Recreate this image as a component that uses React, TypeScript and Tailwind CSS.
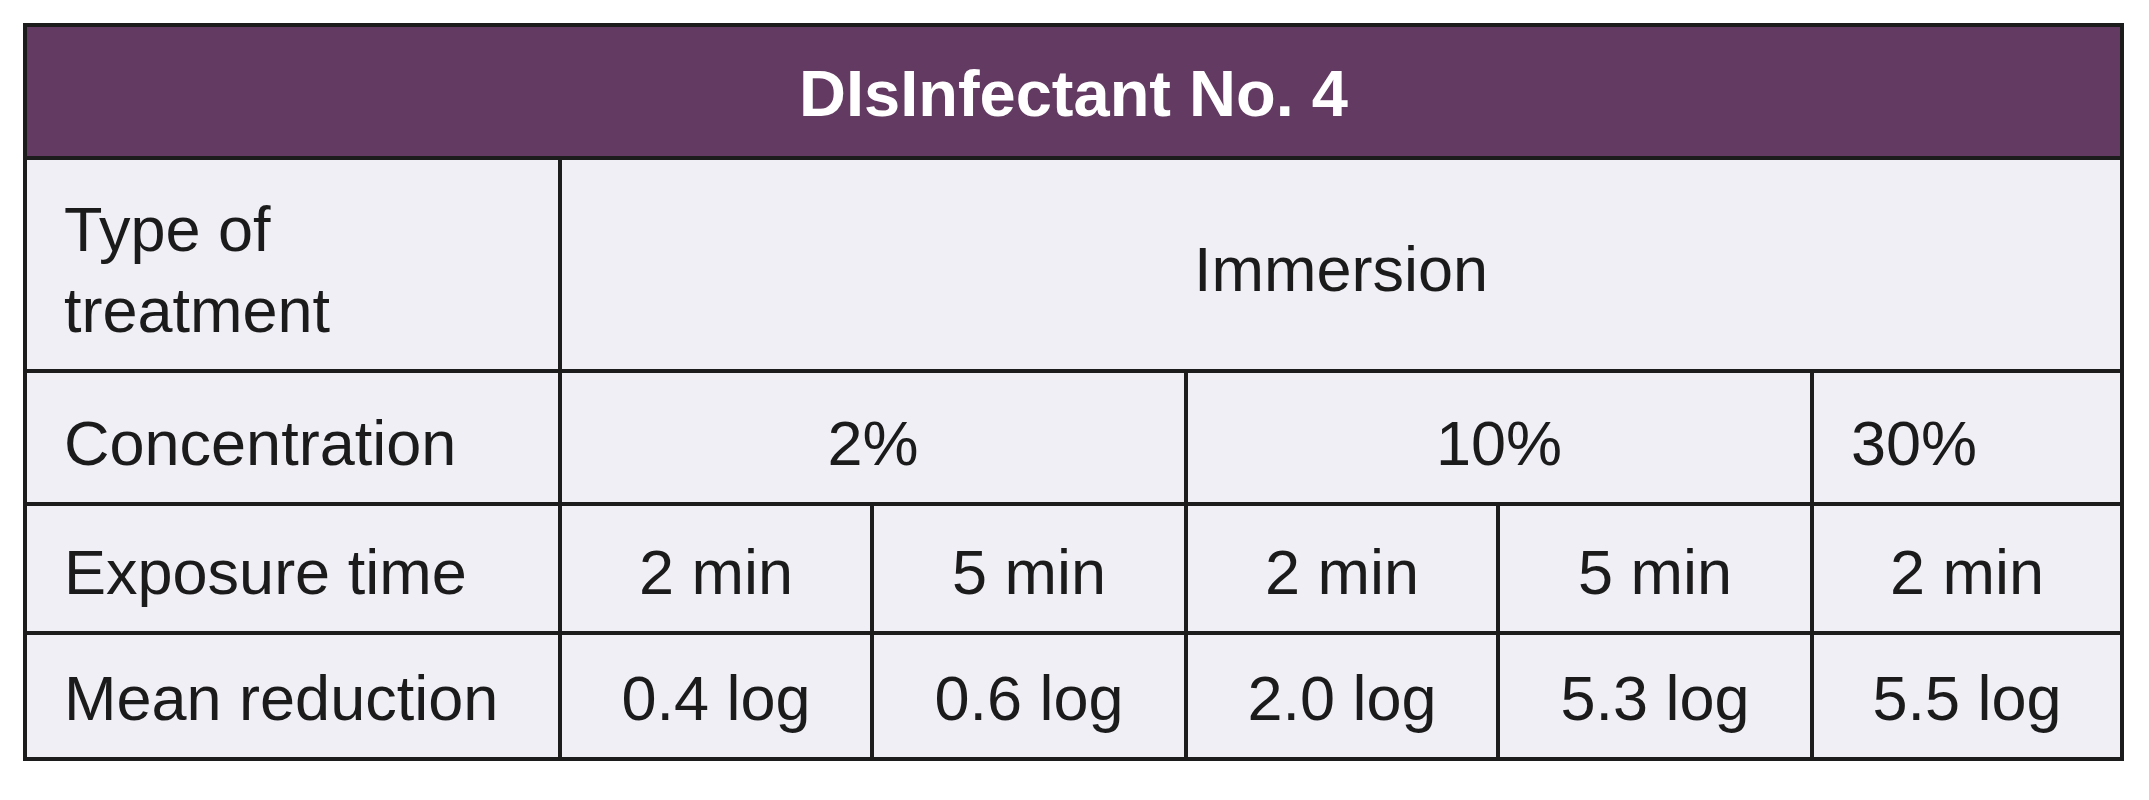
const FONT = "font-['Liberation_Sans',Arial,sans-serif]";

const cell = "bg-[#f0eff6] flex items-center text-[#1b1b1b] text-[63px] leading-[81px]";

const times = ["2 min", "5 min", "2 min", "5 min", "2 min"];
const reductions = ["0.4 log", "0.6 log", "2.0 log", "5.3 log", "5.5 log"];

const App = () => {
  return (
    <div className={`min-h-screen bg-white pt-[23px] pl-[23px] ${FONT}`}>
      <div className="grid w-fit grid-cols-[531px_308px_310px_308px_310px_306px] grid-rows-[129px_209px_129px_125px_122px] gap-[4px] bg-[#1c1c1c] p-[4px]">
        {/* title */}
        <div className="col-span-6 flex items-center justify-center bg-[#633a62] pt-[4px] text-[65px] font-bold text-white">
          DIsInfectant No. 4
        </div>

        {/* type of treatment */}
        <div className={`${cell} pl-[37px] pt-[10px]`}>
          <span>
            Type of
            <br />
            treatment
          </span>
        </div>
        <div className={`${cell} col-span-5 justify-center pt-[10px]`}>Immersion</div>

        {/* concentration */}
        <div className={`${cell} pl-[37px] pt-[12px]`}>Concentration</div>
        <div className={`${cell} col-span-2 justify-center pt-[12px]`}>2%</div>
        <div className={`${cell} col-span-2 justify-center pt-[12px]`}>10%</div>
        <div className={`${cell} pl-[37px] pt-[12px]`}>30%</div>

        {/* exposure time */}
        <div className={`${cell} pl-[37px] pt-[8px]`}>Exposure time</div>
        {times.map((t, i) => (
          <div key={"t" + i} className={`${cell} justify-center pt-[8px]`}>
            {t}
          </div>
        ))}

        {/* mean reduction */}
        <div className={`${cell} pl-[37px] pt-[4px]`}>Mean reduction</div>
        {reductions.map((r, i) => (
          <div key={"r" + i} className={`${cell} justify-center pt-[4px]`}>
            {r}
          </div>
        ))}
      </div>
    </div>
  );
};

export default App;
